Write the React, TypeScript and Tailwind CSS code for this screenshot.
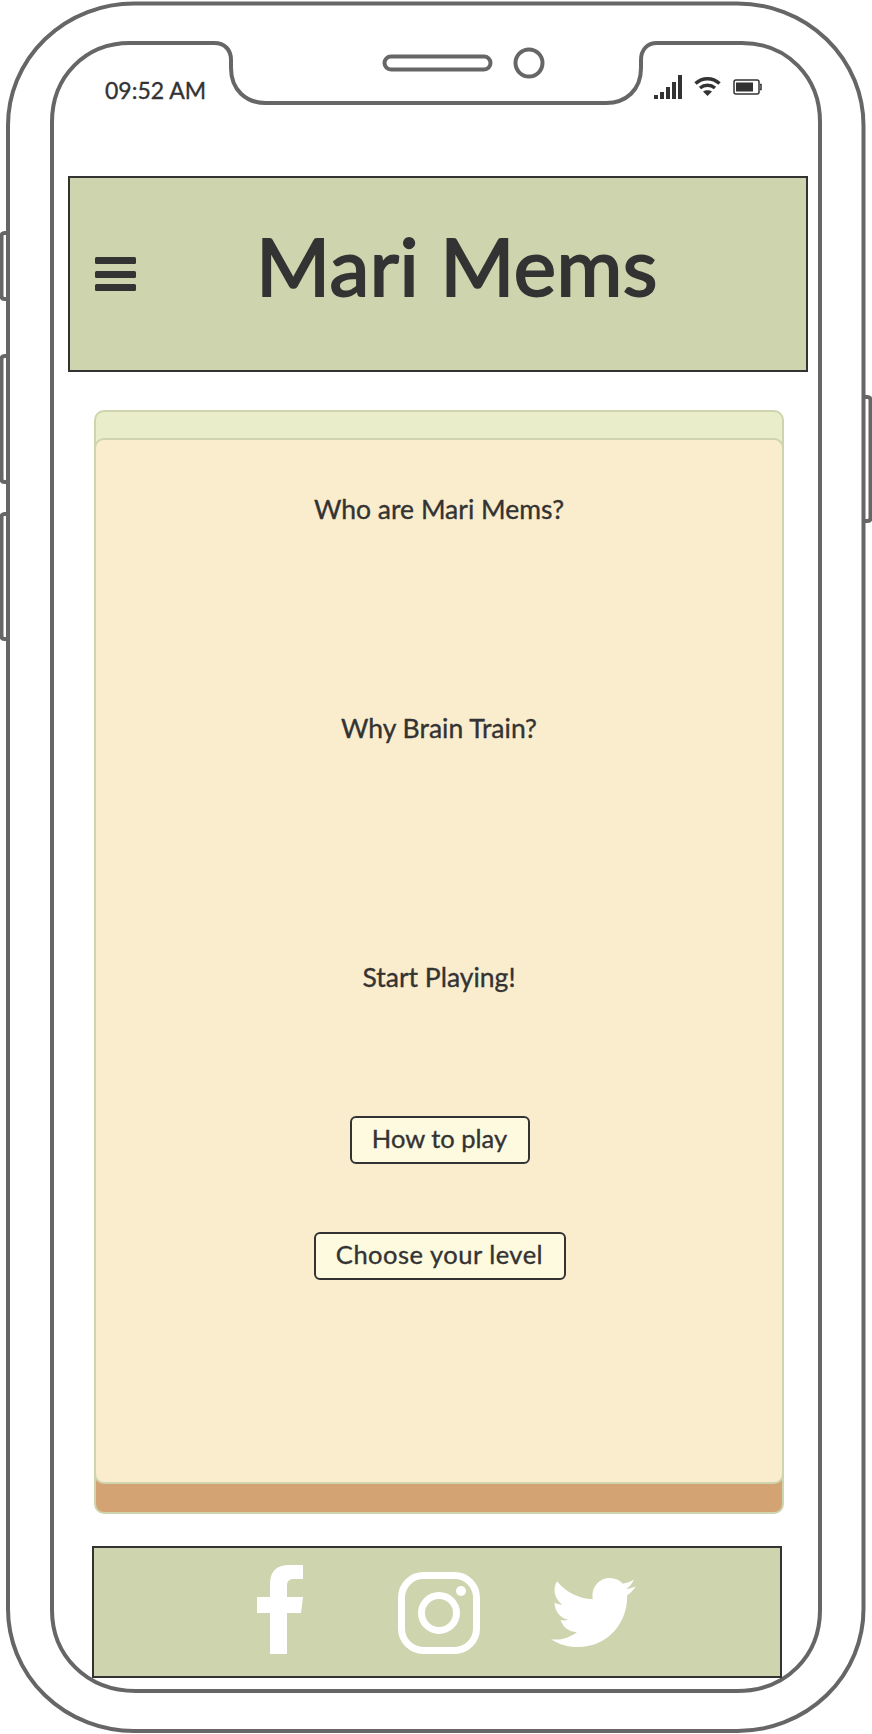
const fontStack = "font-['Lato','Liberation_Sans',sans-serif]";

function PhoneFrame() {
  return (
    <svg
      className="absolute inset-0"
      width="872"
      height="1734"
      viewBox="0 0 872 1734"
      fill="none"
      stroke="#666666"
      strokeWidth="4"
    >
      <rect x="8" y="3.5" width="855.5" height="1727.5" rx="126" ry="122" />
      <path d="M130 43H214C225 43 231 50 231 60V68C231 90 246 103 266 103H606C626 103 641 90 641 68V60C641 50 647 43 657 43H742C787 43 820 77 820 122V1610C820 1655 787 1691 737 1691H136C86 1691 52 1655 52 1610V122C52 77 85 43 130 43Z" />
      <rect x="384.5" y="56.5" width="106" height="13" rx="6.5" />
      <circle cx="529" cy="63" r="13.5" />
      <path d="M8 233H4.5C2.5 233 1.5 234.5 1.5 236V296C1.5 298 2.5 299 4.5 299H8" />
      <path d="M8 356H4.5C2.5 356 1.5 357.5 1.5 359V479C1.5 481 2.5 482 4.5 482H8" />
      <path d="M8 514H4.5C2.5 514 1.5 515.5 1.5 517V636C1.5 638 2.5 639 4.5 639H8" />
      <path d="M864 397H867.5C869.5 397 870.5 398.5 870.5 400V518C870.5 520 869.5 521 867.5 521H864" />
    </svg>
  );
}

function StatusIcons() {
  return (
    <div className="flex items-end gap-[12px]">
      <svg width="28" height="24" viewBox="0 0 28 24" fill="#333333">
        <rect x="0" y="20" width="4" height="4" />
        <rect x="6" y="17" width="4" height="7" />
        <rect x="12" y="12" width="4" height="12" />
        <rect x="18" y="7" width="4" height="17" />
        <rect x="24" y="0" width="4" height="24" />
      </svg>
      <svg width="27" height="20" viewBox="0 0 27 20" fill="none" stroke="#333333" strokeWidth="3.5" className="mb-[3px]">
        <path d="M1.5 7.5C8.5 1 18.5 1 25.5 7.5" />
        <path d="M6 12C10.5 8.2 16.5 8.2 21 12" />
        <path d="M13.5 20L9 15.5C11.5 13.7 15.5 13.7 18 15.5Z" fill="#333333" stroke="none" />
      </svg>
      <svg width="29" height="16" viewBox="0 0 29 16" fill="none" className="mb-[4px]">
        <rect x="1" y="1" width="25" height="14" rx="2" stroke="#333333" strokeWidth="1.5" />
        <rect x="3" y="3.5" width="17" height="9" fill="#333333" />
        <path d="M27 5.5H28V10.5H27" stroke="#333333" strokeWidth="1.5" />
      </svg>
    </div>
  );
}

function SocialIcons() {
  return (
    <div className="flex h-full items-end">
      <svg width="46" height="89" viewBox="0 0 46 89" fill="#ffffff" className="mb-[22px] ml-[163px]">
        <path d="M13 89V48H0V32H13V19C13 6 20 0 32 0H46V14H37C32 14 30 16 30 21V32H46L44 48H30V89Z" />
      </svg>
      <svg width="82" height="82" viewBox="0 0 82 82" fill="none" stroke="#ffffff" className="mb-[22px] ml-[95px]">
        <rect x="3.5" y="3.5" width="75" height="75" rx="22" strokeWidth="7" />
        <circle cx="41" cy="41" r="17.5" strokeWidth="7" />
        <circle cx="63" cy="19" r="5" fill="#ffffff" stroke="none" />
      </svg>
      <svg width="85" height="69" viewBox="0 0 24 19.5" fill="#ffffff" preserveAspectRatio="none" className="mb-[29px] ml-[71px]">
        <path d="M24 2.3c-.9.4-1.8.7-2.8.8 1-.6 1.8-1.6 2.2-2.7-1 .6-2 1-3.1 1.2C19.4.6 18.1 0 16.6 0c-2.7 0-4.9 2.2-4.9 4.9 0 .4 0 .8.1 1.1C7.7 5.8 4.1 3.9 1.7.9c-.4.7-.7 1.6-.7 2.5 0 1.7.9 3.2 2.2 4.1-.8 0-1.6-.2-2.2-.6v.1c0 2.4 1.7 4.4 3.9 4.8-.4.1-.8.2-1.3.2-.3 0-.6 0-.9-.1.6 2 2.4 3.4 4.6 3.4-1.7 1.3-3.8 2.1-6.1 2.1-.4 0-.8 0-1.2-.1 2.2 1.4 4.8 2.2 7.5 2.2 9.1 0 14-7.5 14-14v-.6c1-.7 1.8-1.6 2.5-2.6z" />
      </svg>
    </div>
  );
}

export default function App() {
  return (
    <div className={`relative h-[1734px] w-[872px] overflow-hidden bg-white text-[#333333] ${fontStack} [-webkit-text-stroke:0.35px_#333333]`}>
      <PhoneFrame />
      <div className="relative pl-[105px] pr-[109px] pt-[75px]">
        <div className="flex h-[24px] items-center justify-between">
          <span className="mt-[6px] text-[23px] leading-[30px]">09:52 AM</span>
          <div className="-translate-x-px">
            <StatusIcons />
          </div>
        </div>
      </div>

      <div className="relative mt-[77px] ml-[68px] w-[740px]">
        <header className="flex h-[196px] items-start border-2 border-[#333333] bg-[#ced5ae]">
          <div className="ml-[25px] mt-[79px] flex w-[41px] flex-col gap-[6.5px]">
            <div className="h-[7px] rounded-[1.5px] bg-[#333333]" />
            <div className="h-[7px] rounded-[1.5px] bg-[#333333]" />
            <div className="h-[7px] rounded-[1.5px] bg-[#333333]" />
          </div>
          <h1 className="ml-[120px] mt-[39px] text-[80px] font-normal leading-[96px] tracking-[0.5px] [-webkit-text-stroke:2px_#333333]">Mari Mems</h1>
        </header>

        <main className="ml-[26px] mt-[38px] h-[1104px] w-[690px] rounded-[10px] border-2 border-[#ced5ae] bg-[linear-gradient(#e9edc9_50%,#d4a373_50%)]">
          <div className="-mx-[2px] mt-[26px] flex h-[1046px] flex-col items-center rounded-[10px] border-2 border-[#ced5ae] bg-[#faedcd] text-[26.5px]">
            <p className="mt-[53px] leading-[32px]">Who are Mari Mems?</p>
            <p className="mt-[187px] leading-[32px]">Why Brain Train?</p>
            <p className="mt-[217px] leading-[32px]">Start Playing!</p>
            <button className="ml-px mt-[123px] h-[48px] w-[180px] rounded-[6px] border-2 border-[#333333] bg-[#fefae0] pb-[4px] text-[25.5px]">
              How to play
            </button>
            <button className="ml-px mt-[68px] h-[48px] w-[252px] rounded-[6px] border-2 border-[#333333] bg-[#fefae0] pb-[4px] text-[25.5px] tracking-[0.5px]">
              Choose your level
            </button>
          </div>
        </main>

        <footer className="ml-[24px] mt-[32px] h-[132px] w-[690px] border-2 border-[#333333] bg-[#ced5ae]">
          <SocialIcons />
        </footer>
      </div>
    </div>
  );
}
